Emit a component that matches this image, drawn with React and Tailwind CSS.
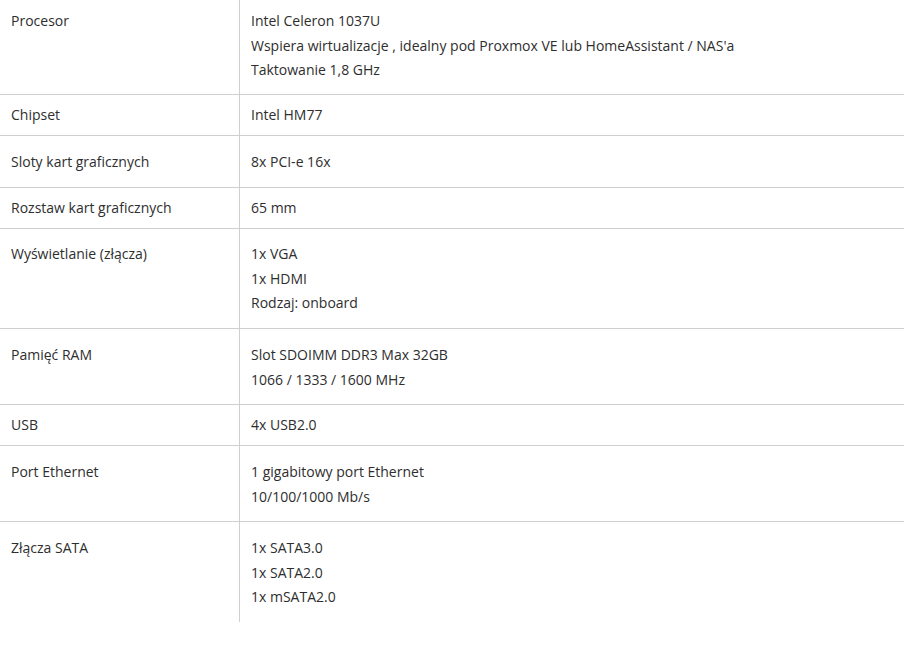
import React from 'react';

const rows = [
    { label: 'Procesor', values: ['Intel Celeron 1037U', 'Wspiera wirtualizacje , idealny pod Proxmox VE lub HomeAssistant / NAS\'a', 'Taktowanie 1,8 GHz'], h: 'h-[95px]', pt: 'pt-[9px]' },
    { label: 'Chipset', values: ['Intel HM77'], h: 'h-[41px]', pt: 'pt-[8px]' },
    { label: 'Sloty kart graficznych', values: ['8x PCI-e 16x'], h: 'h-[52px]', pt: 'pt-[14px]' },
    { label: 'Rozstaw kart graficznych', values: ['65 mm'], h: 'h-[41px]', pt: 'pt-[8px]' },
    { label: 'Wyświetlanie (złącza)', values: ['1x VGA', '1x HDMI', 'Rodzaj: onboard'], h: 'h-[100px]', pt: 'pt-[13px]' },
    { label: 'Pamięć RAM', values: ['Slot SDOIMM DDR3 Max 32GB', '1066 / 1333 / 1600 MHz'], h: 'h-[76px]', pt: 'pt-[14px]' },
    { label: 'USB', values: ['4x USB2.0'], h: 'h-[41px]', pt: 'pt-[8px]' },
    { label: 'Port Ethernet', values: ['1 gigabitowy port Ethernet', '10/100/1000 Mb/s'], h: 'h-[76px]', pt: 'pt-[14px]' },
    { label: 'Złącza SATA', values: ['1x SATA3.0', '1x SATA2.0', '1x mSATA2.0'], h: 'h-[100px]', pt: 'pt-[14px]', last: true },
];

const App = () => {
    return (
        <div className="w-[912px] h-[664px] bg-white font-['Open_Sans',sans-serif] text-[14px] leading-[24.5px] text-[#2e2e2e]">
            <div className="w-[904px]">
                {rows.map((row) => (
                    <div
                        key={row.label}
                        className={`flex ${row.h} ${row.last ? '' : 'border-b border-[#cfcfcf]'}`}
                    >
                        <div className={`w-[240px] shrink-0 border-r border-[#cfcfcf] pl-[11px] ${row.pt}`}>
                            {row.label}
                        </div>
                        <div className={`flex-1 pl-[11px] ${row.pt}`}>
                            {row.values.map((v) => (
                                <div key={v}>{v}</div>
                            ))}
                        </div>
                    </div>
                ))}
            </div>
        </div>
    );
};

export default App;
